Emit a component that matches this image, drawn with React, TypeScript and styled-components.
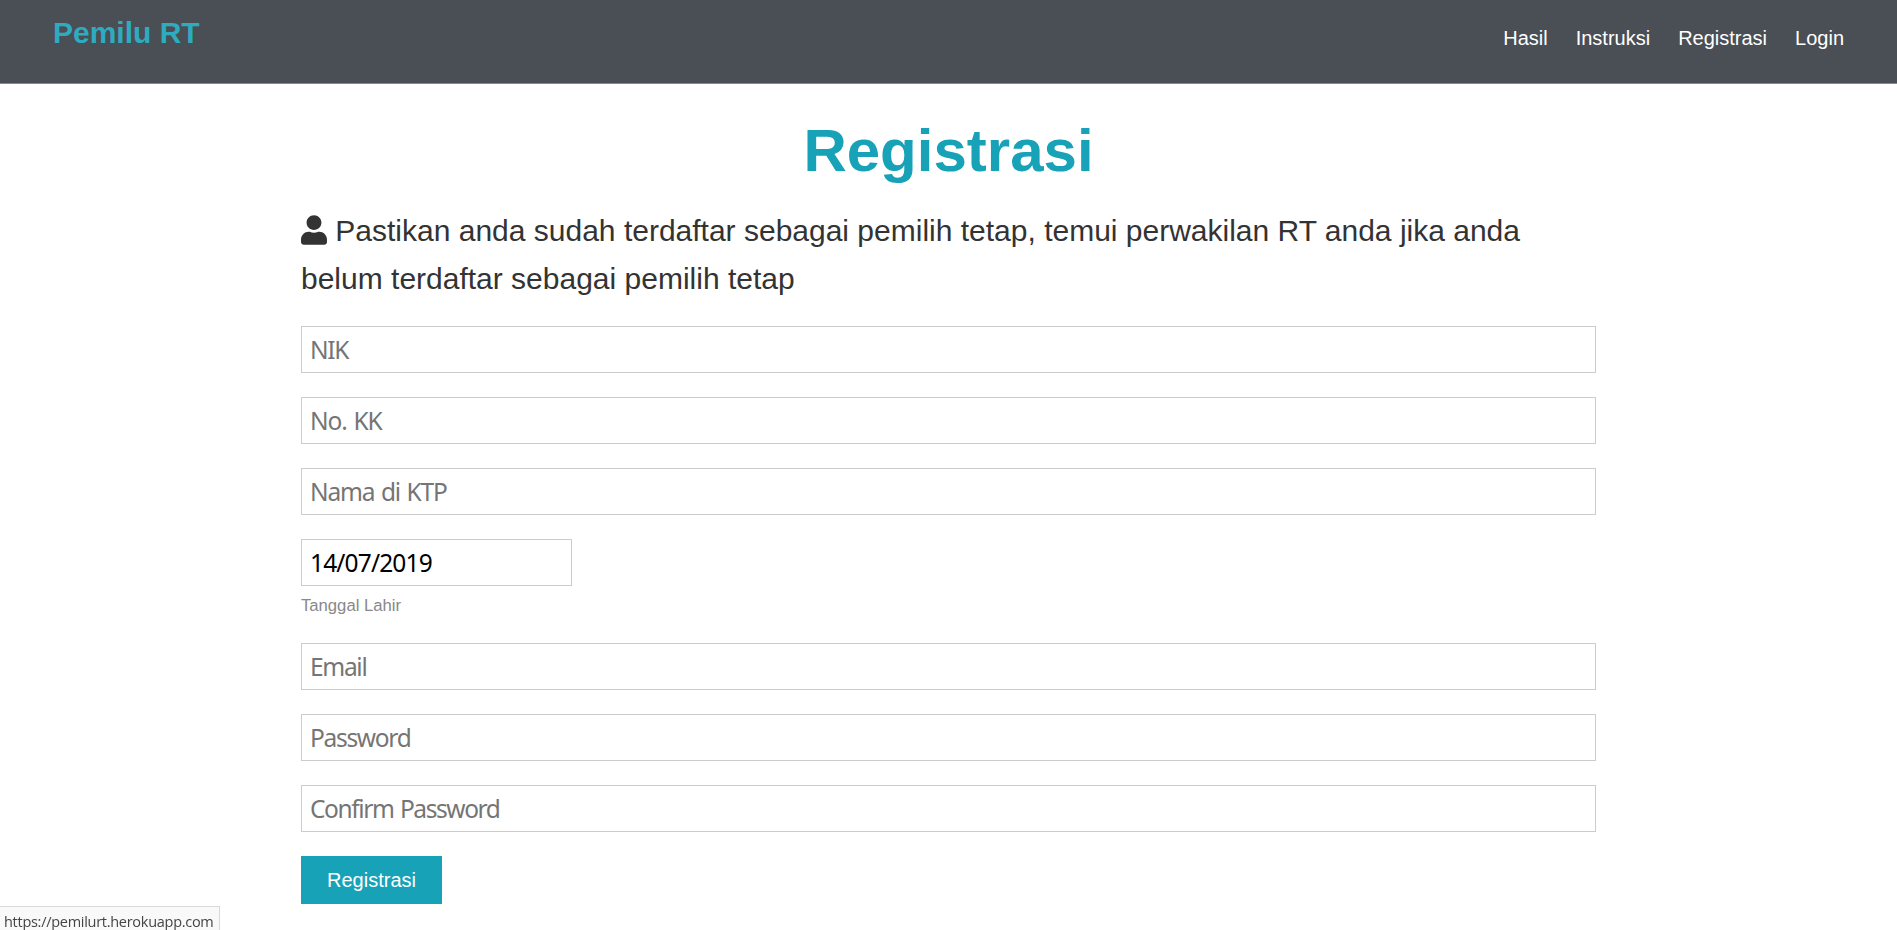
import React from "react";
import styled, { createGlobalStyle } from "styled-components";

const GlobalStyle = createGlobalStyle`
  * { box-sizing: border-box; margin: 0; padding: 0; }
  body {
    font-family: "Liberation Sans", Arial, sans-serif;
    font-size: 20px;
    line-height: 1.6;
    color: #333;
    background: #fff;
    overflow: hidden;
  }
`;

const Header = styled.header`
  display: flex;
  justify-content: space-between;
  align-items: flex-start;
  height: 84px;
  padding: 8px 53px 0;
  background: #4a4e55;
  border-bottom: 1px solid #2eabbf;
`;

const Brand = styled.a`
  padding-top: 1px;
  font-size: 30px;
  line-height: 48px;
  font-weight: bold;
  color: #2eabbf;
`;

const Nav = styled.nav`
  display: flex;
  gap: 28px;
  padding-top: 14px;
`;

const NavLink = styled.a`
  line-height: 32px;
  color: #fff;
`;

const Main = styled.main`
  width: 1295px;
  margin: 0 auto;
  padding-top: 19px;
`;

const Title = styled.h1`
  font-size: 60px;
  line-height: 96px;
  text-align: center;
  color: #17a2b8;
`;

const Lead = styled.p`
  font-size: 30px;
  line-height: 48px;
  margin: 8px 0 23px;
`;

const UserIcon = styled.svg`
  width: 26px;
  height: 30px;
  vertical-align: -4px;
  fill: currentColor;
`;

const Form = styled.form`
  display: flex;
  flex-direction: column;
  align-items: flex-start;
  gap: 24px;
`;

const Input = styled.input<{ $width?: string; $spacing?: string }>`
  display: block;
  width: ${(p) => p.$width ?? "100%"};
  height: 47px;
  padding: 5px 8px;
  border: 1px solid #ccc;
  background: #fff;
  color: #000;
  font-family: "Noto Sans", sans-serif;
  font-size: 24.5px;
  letter-spacing: ${(p) => p.$spacing ?? "-1.3px"};
  word-spacing: 1.5px;
  &::placeholder { color: #757575; opacity: 1; }
`;

const Field = styled.div`
  height: 80px;
`;

const Hint = styled.small`
  display: block;
  margin-top: 6px;
  font-size: 16.67px;
  line-height: 27px;
  color: #888;
`;

const Submit = styled.button`
  width: 141px;
  height: 48px;
  border: 0;
  background: #17a2b8;
  color: #fff;
  font-family: inherit;
  font-size: 20px;
`;

const StatusBar = styled.div`
  position: fixed;
  left: 0;
  bottom: 0;
  width: 220px;
  height: 24px;
  padding-left: 4px;
  border: solid #d9d9d9;
  border-width: 1px 1px 0 0;
  background: #f9f9f9;
  color: #444;
  font-family: "Open Sans", sans-serif;
  font-size: 14.5px;
  line-height: 29px;
  letter-spacing: -0.28px;
  white-space: nowrap;
`;

const links = ["Hasil", "Instruksi", "Registrasi", "Login"];

export default function App() {
  return (
    <>
      <GlobalStyle />
      <Header>
        <Brand>Pemilu RT</Brand>
        <Nav>
          {links.map((l) => (
            <NavLink key={l}>{l}</NavLink>
          ))}
        </Nav>
      </Header>
      <Main>
        <Title>Registrasi</Title>
        <Lead>
          <UserIcon viewBox="0 0 448 512" aria-hidden="true">
            <path d="M224 256c70.700 0 128-57.300 128-128S294.700 0 224 0 96 57.300 96 128s57.300 128 128 128zm89.600 32h-16.700c-22.200 10.200-46.900 16-72.900 16s-50.600-5.800-72.900-16h-16.700C60.200 288 0 348.200 0 422.400V464c0 26.500 21.500 48 48 48h352c26.500 0 48-21.500 48-48v-41.600c0-74.200-60.200-134.400-134.400-134.400z" />
          </UserIcon>{" "}
          Pastikan anda sudah terdaftar sebagai pemilih tetap, temui perwakilan RT anda jika anda
          belum terdaftar sebagai pemilih tetap
        </Lead>
        <Form>
          <Input placeholder="NIK" />
          <Input placeholder="No. KK" $spacing="-1.1px" />
          <Input placeholder="Nama di KTP" $spacing="-1.2px" />
          <Field>
            <Input $width="271px" $spacing="-0.85px" defaultValue="14/07/2019" />
            <Hint>Tanggal Lahir</Hint>
          </Field>
          <Input placeholder="Email" />
          <Input type="password" placeholder="Password" />
          <Input type="password" placeholder="Confirm Password" $spacing="-1.4px" />
          <Submit type="button">Registrasi</Submit>
        </Form>
      </Main>
      <StatusBar>https://pemilurt.herokuapp.com</StatusBar>
    </>
  );
}
